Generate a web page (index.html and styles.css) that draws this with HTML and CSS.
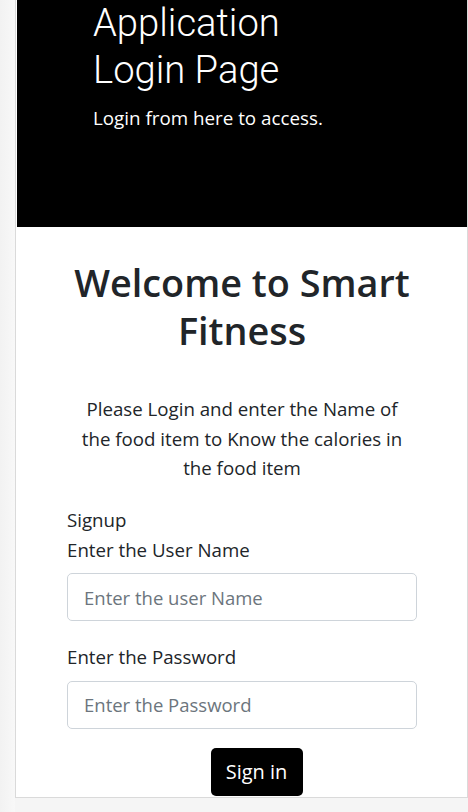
FILE: index.html
```html
<!DOCTYPE html>
<html lang="en">
<head>
<meta charset="utf-8">
<title>Application Login Page</title>
<link rel="stylesheet" href="styles.css">
</head>
<body>
<div class="card">
  <header class="hero">
    <h1 class="hero-title">Application<br>Login Page</h1>
    <p class="hero-lead">Login from here to access.</p>
  </header>
  <main class="content">
    <h2 class="welcome">Welcome to Smart Fitness</h2>
    <p class="intro">Please Login and enter the Name of the food item to Know the calories in the food item</p>
    <form class="form">
      <div class="label label-first">Signup</div>
      <label class="label" for="user">Enter the User Name</label>
      <input class="input" id="user" type="text" placeholder="Enter the user Name">
      <label class="label label-pw" for="pw">Enter the Password</label>
      <input class="input" id="pw" type="password" placeholder="Enter the Password">
      <div class="actions"><button class="btn" type="button">Sign in</button></div>
    </form>
  </main>
</div>
</body>
</html>
```
FILE: styles.css
```css
html, body {
  margin: 0;
  padding: 0;
}
body {
  background: linear-gradient(to right, #f2f2f2 0, #f8f8f8 15px, #f5f5f5 15px);
  font-family: "Open Sans", "Noto Sans", sans-serif;
  color: #212529;
  height: 812px;
  overflow: hidden;
}
.card {
  margin-left: 15px;
  width: 450px;
  background: #fff;
  border-left: 1px solid #dadada;
  border-right: 1px solid #dadada;
  border-bottom: 1px solid #dadada;
  padding-left: 1px;
  box-sizing: content-box;
}
.hero {
  background: #000;
  color: #fff;
  height: 227px;
  padding-left: 76px;
  box-sizing: border-box;
  overflow: hidden;
}
.hero-title {
  margin: 0;
  font-family: Roboto, "Open Sans", sans-serif;
  font-weight: 300;
  font-size: 38.2px;
  line-height: 47px;
}
.hero-lead {
  margin: 9px 0 0;
  font-size: 18.8px;
  line-height: 30px;
  font-weight: 400;
}
.content {
  width: 350px;
  margin: 0 auto;
  padding-top: 32px;
  padding-bottom: 1px;
}
.welcome {
  margin: 0;
  text-align: center;
  font-size: 37.8px;
  line-height: 48px;
  font-weight: 600;
  color: #212529;
}
.intro {
  margin: 39px 0 0;
  padding: 0 10px;
  text-align: center;
  font-size: 18.7px;
  line-height: 29.5px;
}
.form {
  margin-top: 22.5px;
  display: flex;
  flex-direction: column;
}
.label {
  display: block;
  font-size: 18.7px;
  line-height: 29.5px;
}
.label-pw {
  margin-top: 21px;
}
.input {
  display: block;
  width: 100%;
  box-sizing: border-box;
  height: 48px;
  margin-top: 9px;
  padding: 0 16px;
  border: 1px solid #ced4da;
  border-radius: 5px;
  font-family: inherit;
  font-size: 18.5px;
  color: #495057;
  background: #fff;
}
.input::placeholder {
  color: #6c757d;
}
.actions {
  display: flex;
  justify-content: center;
  margin-top: 19px;
  padding-left: 29px;
}
.btn {
  background: #000;
  color: #fff;
  border: 0;
  border-radius: 5px;
  height: 48px;
  padding: 0;
  font-family: inherit;
  font-size: 20px;
  width: 92px;
}
```
